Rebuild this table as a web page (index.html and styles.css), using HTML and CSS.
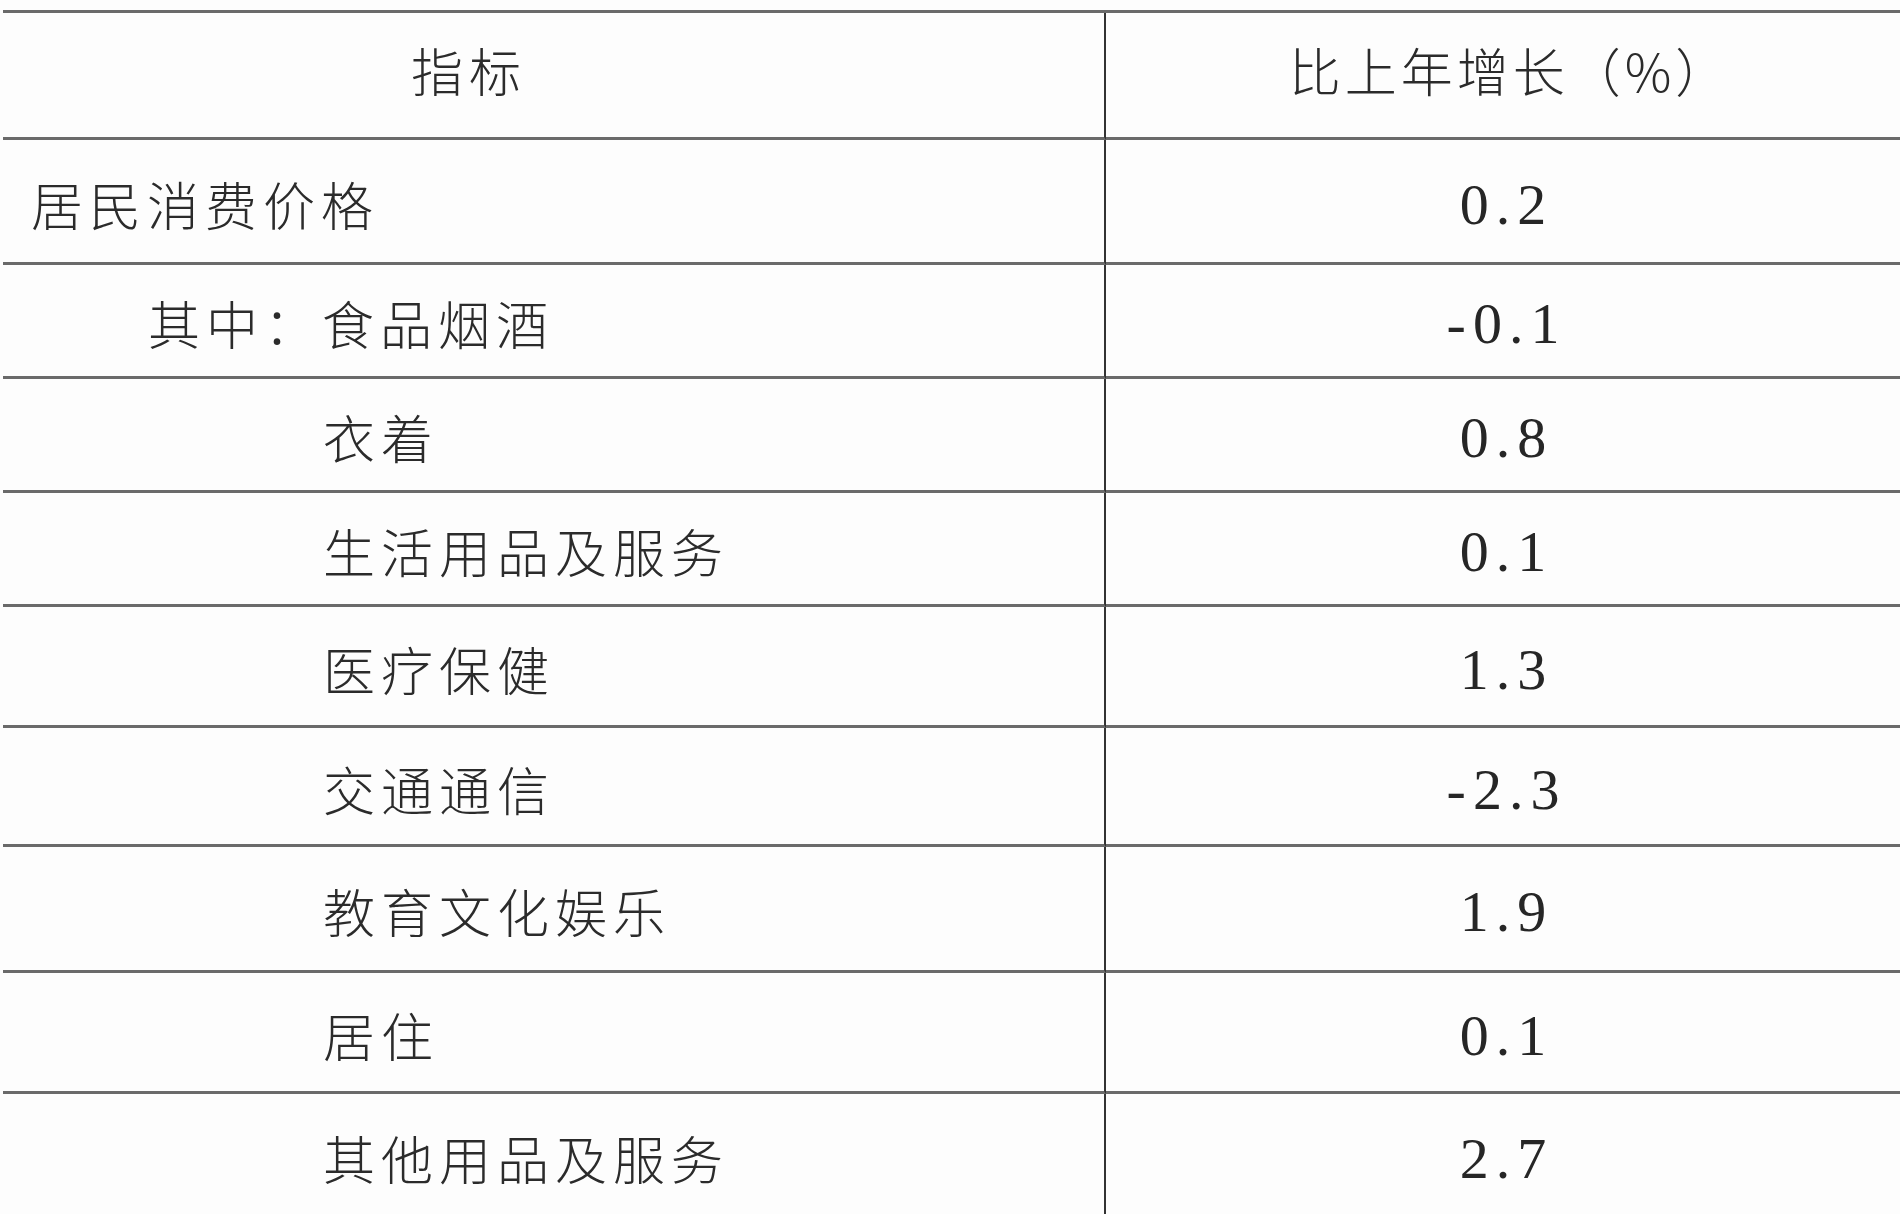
FILE: index.html
```html
<!DOCTYPE html>
<html lang="zh-CN">
<head>
<meta charset="utf-8">
<title>居民消费价格比上年增长</title>
<link rel="stylesheet" href="styles.css">
</head>
<body>
<div class="table">
  <div class="cell label head-label r1">指标</div>
  <div class="cell value head-value r1">比上年增长（%）</div>

  <div class="cell label lv0 r2">居民消费价格</div>
  <div class="cell value num r2">0.2</div>

  <div class="cell label lv1 r3">其中：食品烟酒</div>
  <div class="cell value num r3">-0.1</div>

  <div class="cell label lv2 r4">衣着</div>
  <div class="cell value num r4">0.8</div>

  <div class="cell label lv2 r5">生活用品及服务</div>
  <div class="cell value num r5">0.1</div>

  <div class="cell label lv2 r6">医疗保健</div>
  <div class="cell value num r6">1.3</div>

  <div class="cell label lv2 r7">交通通信</div>
  <div class="cell value num r7">-2.3</div>

  <div class="cell label lv2 r8">教育文化娱乐</div>
  <div class="cell value num r8">1.9</div>

  <div class="cell label lv2 r9">居住</div>
  <div class="cell value num r9">0.1</div>

  <div class="cell label lv2 r10">其他用品及服务</div>
  <div class="cell value num r10">2.7</div>
</div>
</body>
</html>
```

FILE: styles.css
```css
html, body {
  margin: 0;
  padding: 0;
}

body {
  width: 1900px;
  height: 1214px;
  overflow: hidden;
  background: #fdfdfd;
  color: #2b2b2b;
  font-family: "Noto Sans CJK SC", "Noto Sans", sans-serif;
}

.table {
  margin: 10px 0 0 3px;
  display: grid;
  grid-template-columns: 1103px 1fr;
  grid-template-rows: 127px 125px 114px 114px 114px 121px 119px 126px 121px 126px;
  border-top: 3px solid #6a6a6a;
}

.cell {
  box-sizing: border-box;
  display: flex;
  align-items: center;
  border-bottom: 3px solid #6a6a6a;
  white-space: nowrap;
}

.label {
  border-right: 2px solid #333;
  font-size: 52px;
  font-weight: 300;
  letter-spacing: 6px;
  padding-top: 4px;
}

.value {
  justify-content: center;
}

.head-label {
  padding-top: 0;
  padding-bottom: 12px;
  padding-left: 408px;
}

.head-value {
  font-size: 52px;
  font-weight: 300;
  letter-spacing: 4px;
  padding-bottom: 12px;
  padding-left: 14px;
}

.lv0 {
  padding-left: 28px;
}

.lv1 {
  padding-left: 145px;
}

.lv2 {
  padding-left: 320px;
}

.num {
  font-family: "Liberation Serif", "Times New Roman", serif;
  font-size: 58px;
  letter-spacing: 7px;
  padding-left: 7px;
  padding-top: 6px;
  color: #262626;
}
```
